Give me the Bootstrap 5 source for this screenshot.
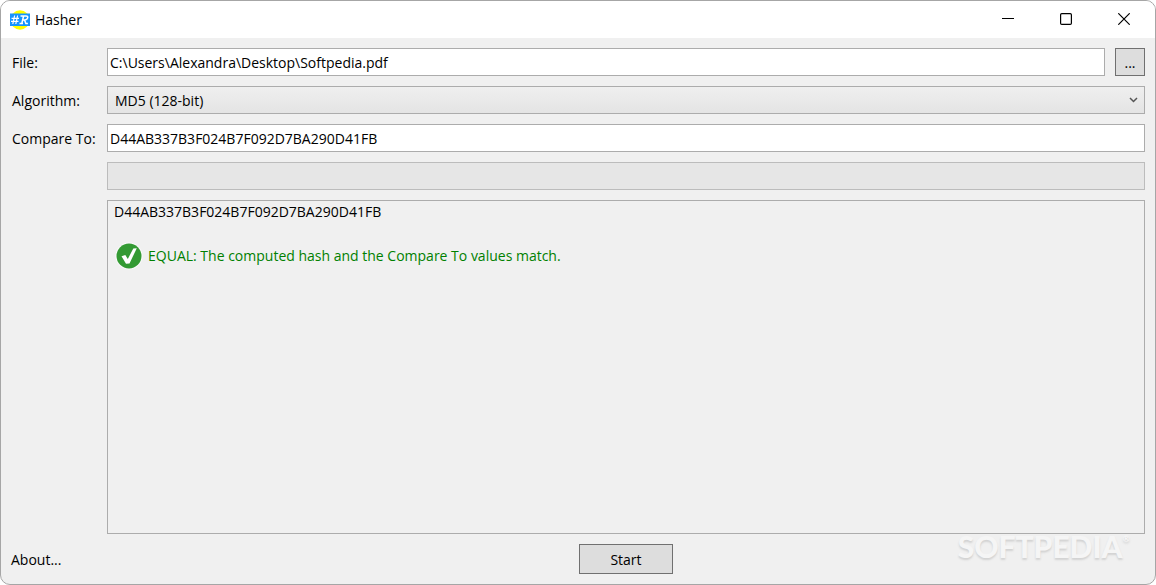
<!DOCTYPE html>
<html lang="en">
<head>
<meta charset="utf-8">
<meta name="viewport" content="width=device-width, initial-scale=1">
<title>Hasher</title>
<link href="https://cdn.jsdelivr.net/npm/bootstrap@5.3.0/dist/css/bootstrap.min.css" rel="stylesheet">
<style>
  body { font-family: "Open Sans", "Noto Sans", sans-serif; font-size: 14px; line-height: 20px; color: #000; background: #fff; }
  .app-window { background: #f0f0f0; border: 1px solid #a6a6a6; border-radius: 10px; overflow: hidden; }
  .title-bar { height: 37px; background: #fff; padding-right: 2px; }
  .title-bar h1 { font-size: 14px; line-height: 20px; font-weight: 400; }
  .caption-btn { width: 58px; height: 35px; border: 0; background: transparent; }
  .caption-btn svg { display: block; margin: auto; }
  .hash-form { display: grid; grid-template-columns: 86px 1fr; grid-template-rows: repeat(4, 28px) 1fr 30px; gap: 10px; padding: 10px; align-items: center; }
  .file-row { gap: 10px; }
  .form-control, .form-select { font-size: 14px; line-height: 20px; height: 28px; border: 1px solid #acacac; border-radius: 0; color: #000; padding: 3px 2px; }
  .form-select { padding: 4px 24px 2px 7px; background: linear-gradient(#efefef, #e4e4e4); }
  .select-arrow { right: 7px; top: 10px; pointer-events: none; }
  .btn-classic { font-size: 14px; line-height: 20px; border: 1px solid #707070; border-radius: 0; background: #ddd; color: #000; padding: 2px 0 0; }
  .btn-browse { width: 30px; height: 28px; }
  .btn-start { width: 94px; height: 30px; }
  .progress { height: 28px; border: 1px solid #bcbcbc; border-radius: 0; background: #e6e6e6; }
  .result-panel { border: 1px solid #acacac; padding: 1px 6px; }
  .result-text { color: #008000; gap: 5px; }
  .label-text { white-space: nowrap; padding: 2px 0 0 1px; }
  .about-link { color: #000; text-decoration: none; padding-top: 2px; }
  .watermark { right: 25px; bottom: 20px; font: 900 30px/36px "Lato", sans-serif; color: #f5f5f5; text-shadow: 0 2px 2px #d2d2d2; pointer-events: none; }
  .watermark sup { font-size: 9px; top: -16px; }
</style>
</head>
<body>
<div class="app-window position-relative d-flex flex-column min-vh-100">
  <header class="title-bar d-flex align-items-center">
    <svg class="ms-2" width="22" height="22" viewBox="0 0 22 22" aria-hidden="true">
      <circle cx="11" cy="11" r="9.700" fill="#ffff00"/>
      <rect x="1" y="4.500" width="20" height="12.500" fill="#1595ff"/>
      <path d="M5.600 6.500 3.800 15M8.600 6.500l-1.800 8.500M2.500 9.300h7.500M2 12.300h7.500" stroke="#fff" stroke-width="1.200" fill="none"/>
      <path d="M14.600 7 12.800 14.500M11.500 7h5.500q2.300 0 1.600 2.100t-3.300 1.800h-1.500M15.500 11l1.400 3.500h2M10.500 14.500h3.500" stroke="#fff" stroke-width="1.500" fill="none"/>
    </svg>
    <h1 class="mb-0 ms-1">Hasher</h1>
    <div class="d-flex ms-auto align-self-start">
      <button type="button" class="caption-btn p-0" aria-label="Minimize"><svg width="12" height="12" viewBox="0 0 12 12"><path d="M0 5.500h12" stroke="#000"/></svg></button>
      <button type="button" class="caption-btn p-0" aria-label="Maximize"><svg width="12" height="12" viewBox="0 0 12 12"><rect x=".6" y=".6" width="10.800" height="10.800" rx="1.200" fill="none" stroke="#000" stroke-width="1.200"/></svg></button>
      <button type="button" class="caption-btn p-0" aria-label="Close"><svg width="12" height="12" viewBox="0 0 12 12"><path d="m.3.3 11.400 11.400M11.700.3.3 11.700" stroke="#000" stroke-width="1.200"/></svg></button>
    </div>
  </header>
  <form class="hash-form flex-grow-1">
    <label class="label-text" for="file">File:</label>
    <div class="file-row d-flex">
      <input id="file" class="form-control" type="text" value="C:\Users\Alexandra\Desktop\Softpedia.pdf">
      <button type="button" class="btn btn-classic btn-browse flex-shrink-0" aria-label="Browse">...</button>
    </div>
    <label class="label-text" for="algorithm">Algorithm:</label>
    <div class="position-relative">
      <select id="algorithm" class="form-select"><option>MD5 (128-bit)</option></select>
      <svg class="select-arrow position-absolute" width="9" height="8" viewBox="0 0 9 8" aria-hidden="true"><path d="m1 2 3.500 3.500L8 2" fill="none" stroke="#555" stroke-width="1.500"/></svg>
    </div>
    <label class="label-text" for="compare">Compare To:</label>
    <input id="compare" class="form-control" type="text" value="D44AB337B3F024B7F092D7BA290D41FB">
    <span></span>
    <div class="progress" role="progressbar" aria-label="Hash progress" aria-valuenow="0" aria-valuemin="0" aria-valuemax="100"></div>
    <span></span>
    <output class="result-panel d-block h-100">
      <span class="d-block">D44AB337B3F024B7F092D7BA290D41FB</span>
      <span class="result-text d-flex align-items-center mt-3 pt-1">
        <svg class="flex-shrink-0" width="29" height="28" viewBox="0 0 29 28" aria-hidden="true">
          <circle cx="15" cy="14" r="13.500" fill="#fafafa"/><circle cx="15" cy="14" r="12.500" fill="#339a33"/>
          <path d="m7.500 14.300 3.800-1.300 2.500 4L19.300 6.500l3.500-.3-7.300 15.300-3.500.2z" fill="#fff"/>
        </svg>
        <span>EQUAL: The computed hash and the Compare To values match.</span>
      </span>
    </output>
    <a class="about-link" href="#">About...</a>
    <button type="button" class="btn btn-classic btn-start mx-auto">Start</button>
  </form>
  <div class="watermark position-absolute">SOFTPEDIA<sup>®</sup></div>
</div>
<script src="https://cdn.jsdelivr.net/npm/bootstrap@5.3.0/dist/js/bootstrap.bundle.min.js"></script>
</body>
</html>
